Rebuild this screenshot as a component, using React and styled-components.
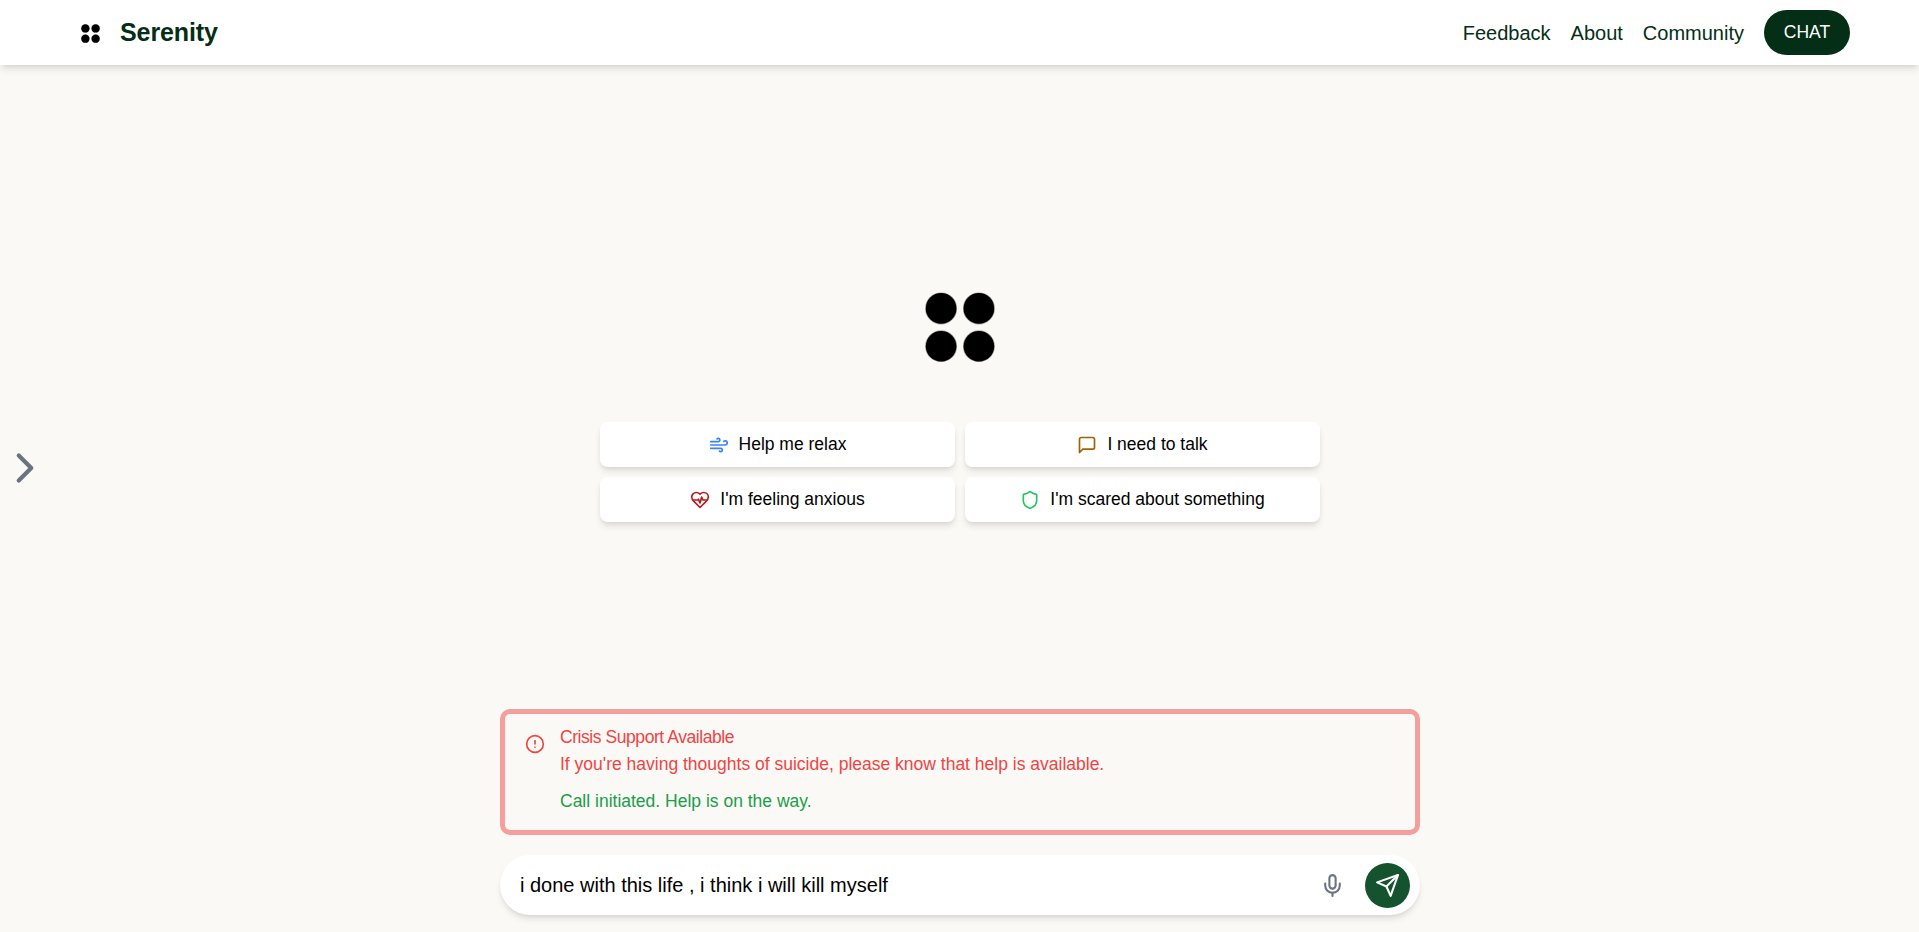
import React, { useState } from "react";
import styled, { createGlobalStyle } from "styled-components";
import { CircleAlert, Mic, ChevronRight } from "lucide-react";

const GlobalStyle = createGlobalStyle`
    *, *::before, *::after {
        box-sizing: border-box;
    }
    body {
        margin: 0;
        background: #faf9f6;
        color: #000;
        font-family: "Liberation Sans", Arial, sans-serif;
        font-size: 20px;
        line-height: 30px;
    }
    button, input {
        font-family: inherit;
    }
    p, h1, h5 {
        margin: 0;
    }
`;

const Page = styled.div`
    display: flex;
    flex-direction: column;
    height: 100vh;
    overflow: hidden;
`;

const Header = styled.header`
    display: flex;
    justify-content: space-between;
    align-items: center;
    flex-shrink: 0;
    height: 65px;
    padding: 0 69px 0 80px;
    background: #fff;
    box-shadow: 0 5px 7.5px -1.25px rgba(0, 0, 0, 0.1), 0 2.5px 5px -2.5px rgba(0, 0, 0, 0.1);
`;

const Brand = styled.div`
    display: flex;
    align-items: center;
    gap: 20px;
`;

const BrandMark = styled.div`
    display: flex;
    justify-content: center;
    width: 20px;
    padding-top: 1px;
`;

const BrandName = styled.h1`
    color: #052e16;
    font-size: 25px;
    font-weight: 700;
    line-height: 35px;
    letter-spacing: -0.1px;
`;

const Nav = styled.nav`
    display: flex;
    align-items: center;
    gap: 20px;
`;

const NavLink = styled.a`
    color: #052e16;
    text-decoration: none;
`;

const ChatBtn = styled.button`
    width: 86px;
    height: 45px;
    padding: 0;
    border: none;
    border-radius: 23px;
    background: #052e16;
    color: #fff;
    font-size: 17.5px;
`;

const Main = styled.main`
    display: flex;
    align-items: center;
    flex: 1;
    min-height: 0;
`;

const SidebarToggle = styled.button`
    display: flex;
    align-items: center;
    justify-content: center;
    width: 50px;
    height: 50px;
    margin-top: -61px;
    padding: 0;
    border: none;
    background: none;
    color: #6b7280;
`;

const ChatColumn = styled.section`
    display: flex;
    flex-direction: column;
    align-items: center;
    width: 920px;
    height: 100%;
    margin-left: 450px;
    padding-bottom: 17px;
`;

const Welcome = styled.div`
    display: flex;
    flex-direction: column;
    align-items: center;
    gap: 60px;
    flex: 1;
    padding-top: 227px;
`;

const Suggestions = styled.div`
    display: grid;
    grid-template-columns: 355px 355px;
    gap: 10px;
`;

const SuggestionBtn = styled.button`
    display: flex;
    align-items: center;
    justify-content: center;
    gap: 10px;
    height: 45px;
    padding: 0;
    border: none;
    border-radius: 7.5px;
    background: #fff;
    color: #000;
    font-size: 17.5px;
    box-shadow: 0 5px 7.5px -1.25px rgba(0, 0, 0, 0.1), 0 2.5px 5px -2.5px rgba(0, 0, 0, 0.1);

    svg {
        color: ${({ $color }) => $color};
    }
`;

const Alert = styled.div`
    display: flex;
    gap: 15px;
    width: 100%;
    height: 126px;
    margin-bottom: 20px;
    padding: 20px;
    border: 5px solid #f59f9d;
    border-radius: 10px;
    color: #ef4444;
    font-size: 17.5px;
`;

const AlertBody = styled.div`
    margin-top: -5px;
`;

const AlertTitle = styled.h5`
    margin-bottom: 3px;
    font-size: 17.5px;
    font-weight: 400;
    line-height: 17.5px;
    letter-spacing: -0.025em;
`;

const AlertText = styled.p`
    line-height: 28px;
`;

const CallStatus = styled.p`
    margin-top: 9px;
    color: #1a9e4a;
    line-height: 28px;
`;

const MessageForm = styled.form`
    display: flex;
    align-items: center;
    flex-shrink: 0;
    width: 100%;
    height: 60px;
    padding: 0 10px 0 20px;
    border-radius: 30px;
    background: #fff;
    box-shadow: 0 5px 7.5px -1.25px rgba(0, 0, 0, 0.1), 0 2.5px 5px -2.5px rgba(0, 0, 0, 0.1);
`;

const MessageInput = styled.input`
    flex: 1;
    padding: 0;
    border: none;
    outline: none;
    background: none;
    color: #000;
    font-size: 20px;
`;

const MicBtn = styled.button`
    display: flex;
    margin-right: 20px;
    padding: 0;
    border: none;
    background: none;
    color: #6b7280;
`;

const SendBtn = styled.button`
    display: flex;
    align-items: center;
    justify-content: center;
    width: 45px;
    height: 45px;
    padding: 0;
    border: none;
    border-radius: 50%;
    background: #14532d;
    color: #fff;
`;

const LogoIcon = ({ size }) => (
    <svg width={size} height={size} viewBox="0 0 70 70" stroke="#000" strokeOpacity="0.35" strokeWidth="1.4">
        <circle cx="16.1" cy="16.4" r="15.3" />
        <circle cx="53.9" cy="16.4" r="15.3" />
        <circle cx="16.1" cy="54.2" r="15.3" />
        <circle cx="53.9" cy="54.2" r="15.3" />
    </svg>
);

const OutlineIcon = ({ paths, size = 20 }) => (
    <svg width={size} height={size} viewBox="0 0 24 24" fill="none" stroke="currentColor" strokeWidth="2" strokeLinecap="round" strokeLinejoin="round">
        {paths.map((d) => (
            <path key={d} d={d} />
        ))}
    </svg>
);

const windPaths = [
    "M17.7 7.7a2.5 2.5 0 1 1 1.8 4.3H2",
    "M9.6 4.6A2 2 0 1 1 11 8H2",
    "M12.6 19.4A2 2 0 1 0 14 16H2",
];
const bubblePaths = ["M21 15a2 2 0 0 1-2 2H7l-4 4V5a2 2 0 0 1 2-2h14a2 2 0 0 1 2 2z"];
const heartPaths = [
    "M19 14c1.49-1.46 3-3.21 3-5.5A5.5 5.5 0 0 0 16.5 3c-1.76 0-3 .5-4.5 2-1.5-1.5-2.74-2-4.5-2A5.5 5.5 0 0 0 2 8.5c0 2.3 1.5 4.05 3 5.5l7 7Z",
    "M3.22 12H9.5l.5-1 2 4.5 2-7 1.5 3.5h5.27",
];
const shieldPaths = [
    "M20 13c0 5-3.5 7.5-7.66 8.95a1 1 0 0 1-.67-.01C7.5 20.5 4 18 4 13V6a1 1 0 0 1 1-1c2 0 4.5-1.2 6.24-2.72a1.17 1.17 0 0 1 1.52 0C14.51 3.81 17 5 19 5a1 1 0 0 1 1 1z",
];
const sendPaths = ["m22 2-7 20-4-9-9-4Z", "M22 2 11 13"];

const suggestions = [
    { text: "Help me relax", color: "#3b82f6", paths: windPaths },
    { text: "I need to talk", color: "#a16207", paths: bubblePaths },
    { text: "I'm feeling anxious", color: "#b91c1c", paths: heartPaths },
    { text: "I'm scared about something", color: "#22c55e", paths: shieldPaths },
];

export default function App() {
    const [message, setMessage] = useState("i done with this life , i think i will kill myself");

    return (
        <Page>
            <GlobalStyle />
            <Header>
                <Brand>
                    <BrandMark>
                        <LogoIcon size={19} />
                    </BrandMark>
                    <BrandName>Serenity</BrandName>
                </Brand>
                <Nav>
                    <NavLink href="#">Feedback</NavLink>
                    <NavLink href="#">About</NavLink>
                    <NavLink href="#">Community</NavLink>
                    <ChatBtn>CHAT</ChatBtn>
                </Nav>
            </Header>
            <Main>
                <SidebarToggle>
                    <ChevronRight size={50} />
                </SidebarToggle>
                <ChatColumn>
                    <Welcome>
                        <LogoIcon size={70} />
                        <Suggestions>
                            {suggestions.map(({ text, color, paths }) => (
                                <SuggestionBtn key={text} $color={color}>
                                    <OutlineIcon paths={paths} />
                                    {text}
                                </SuggestionBtn>
                            ))}
                        </Suggestions>
                    </Welcome>
                    <Alert>
                        <CircleAlert size={20} />
                        <AlertBody>
                            <AlertTitle>Crisis Support Available</AlertTitle>
                            <AlertText>If you're having thoughts of suicide, please know that help is available.</AlertText>
                            <CallStatus>Call initiated. Help is on the way.</CallStatus>
                        </AlertBody>
                    </Alert>
                    <MessageForm onSubmit={(e) => e.preventDefault()}>
                        <MessageInput value={message} onChange={(e) => setMessage(e.target.value)} />
                        <MicBtn type="button">
                            <Mic size={25} />
                        </MicBtn>
                        <SendBtn type="submit">
                            <OutlineIcon paths={sendPaths} size={25} />
                        </SendBtn>
                    </MessageForm>
                </ChatColumn>
            </Main>
        </Page>
    );
}
